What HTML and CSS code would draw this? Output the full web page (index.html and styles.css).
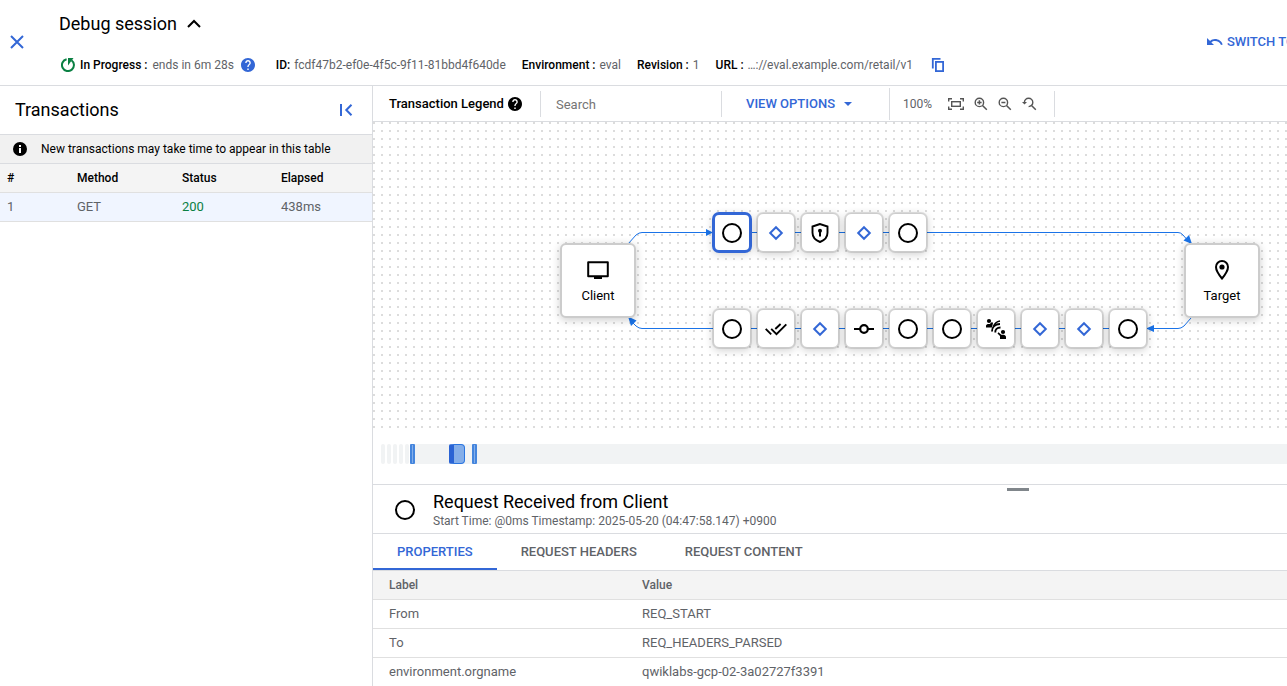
FILE: index.html
```
<!DOCTYPE html>
<html lang="en">
<head>
    <meta charset="UTF-8">
    <meta name="viewport" content="width=device-width, initial-scale=1.0">
    <title>Debug session</title>
    <link rel="stylesheet" href="styles.css">
</head>
<body>
    <!-- Shared icons -->
    <svg class="sprite" aria-hidden="true">
        <symbol id="help" viewBox="2 2 20 20"><path d="M12 2C6.48 2 2 6.48 2 12s4.48 10 10 10 10-4.48 10-10S17.52 2 12 2zm1 17h-2v-2h2v2zm2.07-7.75l-.9.92C13.45 12.9 13 13.5 13 15h-2v-.5c0-1.1.45-2.1 1.17-2.83l1.24-1.26c.37-.36.59-.86.59-1.41 0-1.1-.9-2-2-2s-2 .9-2 2H8c0-2.21 1.79-4 4-4s4 1.79 4 4c0 .88-.36 1.68-.93 2.25z" fill="currentColor"/></symbol>
        <symbol id="ring" viewBox="0 0 24 24"><circle cx="12" cy="12" r="9" fill="none" stroke="currentColor" stroke-width="2"/></symbol>
        <symbol id="diamond" viewBox="0 0 24 24"><path d="M12 6.2l5.8 5.8-5.8 5.8L6.2 12z" fill="none" stroke="#3367d6" stroke-width="2"/></symbol>
    </svg>

    <!-- Session header -->
    <header class="header">
        <button class="icon-btn close" aria-label="Close">
            <svg width="14" height="14" viewBox="0 0 14 14"><path d="M1 1l12 12M13 1L1 13" stroke="currentColor" stroke-width="2"/></svg>
        </button>
        <div class="session">
            <h1 class="session-title">Debug session
                <button class="icon-btn" aria-label="Collapse">
                    <svg width="14" height="9" viewBox="0 0 14 9"><path d="M1 8l6-6 6 6" fill="none" stroke="#000" stroke-width="2"/></svg>
                </button>
            </h1>
            <div class="session-meta">
                <div class="meta progress">
                    <svg width="14" height="14" viewBox="0 0 14 14"><path d="M10.500 2.200A6 6 0 1 1 5.600 1.200" fill="none" stroke="#0b8043" stroke-width="2"/><path d="M7 0h5.500L7 7.500z" fill="#0b8043"/></svg>
                    <b>In Progress :</b> <span>ends in 6m 28s</span>
                    <svg class="help-blue" width="14" height="14"><use href="#help"/></svg>
                </div>
                <div class="meta"><b>ID:</b> <span>fcdf47b2-ef0e-4f5c-9f11-81bbd4f640de</span></div>
                <div class="meta"><b>Environment :</b> <span>eval</span></div>
                <div class="meta"><b>Revision :</b> <span>1</span></div>
                <div class="meta"><b>URL :</b> <span>…://eval.example.com/retail/v1</span></div>
                <button class="icon-btn copy" aria-label="Copy URL">
                    <svg width="14" height="14" viewBox="0 0 14 14"><path d="M1.8 10.500V.9H9.500" fill="none" stroke="currentColor" stroke-width="1.800"/><rect x="4.900" y="3.900" width="7.200" height="9.200" fill="none" stroke="currentColor" stroke-width="1.800"/></svg>
                </button>
            </div>
        </div>
        <button class="text-btn switch">
            <svg width="16" height="8" viewBox="0 0 16 8"><path d="M0 0v7h7L4.400 4.400C5.300 3.500 6.600 3 8 3c2.700 0 5 1.600 6 4l1.700-.6C14.500 3.200 11.500 1.100 8 1.100c-1.900 0-3.600.7-4.900 1.900z" fill="currentColor"/></svg>
            SWITCH TO
        </button>
    </header>

    <div class="content">
        <!-- Transactions -->
        <aside class="sidebar">
            <div class="sidebar-head">
                <h2>Transactions</h2>
                <button class="icon-btn" aria-label="Hide transactions">
                    <svg width="13" height="12" viewBox="0 0 13 12"><path d="M1 0v12" stroke="currentColor" stroke-width="2"/><path d="M11.500.800L6.300 6l5.200 5.200" fill="none" stroke="currentColor" stroke-width="2"/></svg>
                </button>
            </div>
            <p class="notice">
                <svg width="14" height="14" viewBox="0 0 14 14"><circle cx="7" cy="7" r="7" fill="#000"/><path d="M6 3h2v2H6zM6 6h2v5H6z" fill="#fff"/></svg>
                New transactions may take time to appear in this table
            </p>
            <table class="transactions">
                <thead>
                    <tr><th class="col-num">#</th><th class="col-method">Method</th><th class="col-status">Status</th><th>Elapsed</th></tr>
                </thead>
                <tbody>
                    <tr><td>1</td><td>GET</td><td class="ok">200</td><td>438ms</td></tr>
                </tbody>
            </table>
        </aside>

        <main class="main">
            <div class="toolbar">
                <div class="tool legend">Transaction Legend <svg width="14" height="14"><use href="#help"/></svg></div>
                <div class="tool search"><input type="text" placeholder="Search" aria-label="Search"></div>
                <div class="tool options">
                    <button class="text-btn">VIEW OPTIONS <svg width="8" height="4" viewBox="0 0 8 4"><path d="M0 0h8L4 4z" fill="currentColor"/></svg></button>
                </div>
                <div class="tool zoom">
                    <span>100%</span>
                    <button class="icon-btn" aria-label="Fit to screen">
                        <svg width="16" height="12" viewBox="0 0 16 12"><path d="M.7 3.500V.7H4M12 .7h3.300v2.800M15.300 8.500v2.800H12M4 11.300H.7V8.500" fill="none" stroke="currentColor" stroke-width="1.400"/><rect x="3.700" y="3.700" width="8.600" height="4.600" fill="none" stroke="currentColor" stroke-width="1.400"/></svg>
                    </button>
                    <button class="icon-btn" aria-label="Zoom in">
                        <svg width="14" height="14" viewBox="0 0 14 14"><circle cx="5.400" cy="5.400" r="4.200" fill="none" stroke="currentColor" stroke-width="1.400"/><path d="M8.500 8.500l4.300 4.300M3.200 5.400h4.400M5.400 3.200v4.400" stroke="currentColor" stroke-width="1.500"/></svg>
                    </button>
                    <button class="icon-btn" aria-label="Zoom out">
                        <svg width="14" height="14" viewBox="0 0 14 14"><circle cx="5.400" cy="5.400" r="4.200" fill="none" stroke="currentColor" stroke-width="1.400"/><path d="M8.500 8.500l4.300 4.300M3.400 5.400h4" stroke="currentColor" stroke-width="1.500"/></svg>
                    </button>
                    <button class="icon-btn" aria-label="Reset zoom">
                        <svg width="15" height="14" viewBox="0 0 15 14"><path d="M2.400 5.400a4.200 4.200 0 1 1 4.200 4.200" fill="none" stroke="currentColor" stroke-width="1.400"/><path d="M9.500 8.500l4.300 4.300" stroke="currentColor" stroke-width="1.500"/><path d="M0 5h5L2.500 7.600z" fill="currentColor"/></svg>
                    </button>
                </div>
            </div>

            <!-- Flow diagram -->
            <div class="canvas">
                <svg class="wires" width="914" height="311" viewBox="0 0 914 311" fill="none" stroke="#1a73e8">
                    <path d="M255 122L263 113Q266 110.500 269 110.500H339"/>
                    <path d="M339 110.500H805Q808 110.500 810 113L817 121"/>
                    <path d="M818 196L811 204Q808 206.500 805 206.500H775"/>
                    <path d="M775 206.500H269Q266 206.500 263 204L256 197"/>
                    <g fill="#1a73e8" stroke="none">
                        <path d="M340 110.500l-7-3.500v7zM773 206.500l8-3.500v7zM819 122l-8.500-3.500 5.500-5.500zM255 194.500l8.500 4-5.500 5.500z"/>
                    </g>
                </svg>

                <div class="endpoint client">
                    <svg width="24" height="24" viewBox="0 0 24 24"><path d="M2.200 4.200h19.600v14H2.200z" fill="none" stroke="#000" stroke-width="2" stroke-linejoin="round"/><path d="M8 18h8v3H8z"/></svg>
                    Client
                </div>
                <div class="endpoint target">
                    <svg width="24" height="24" viewBox="0 0 24 24"><path d="M12 3c-3.400 0-6 2.600-6 6 0 4.300 6 11.500 6 11.500S18 13.300 18 9c0-3.400-2.600-6-6-6z" fill="none" stroke="#000" stroke-width="2"/><circle cx="12" cy="9" r="2.600"/></svg>
                    Target
                </div>

                <div class="steps request">
                    <button class="step selected" aria-label="Request received from client"><svg><use href="#ring"/></svg></button>
                    <button class="step" aria-label="Condition"><svg><use href="#diamond"/></svg></button>
                    <button class="step" aria-label="Security policy">
                        <svg viewBox="0 0 24 24"><path d="M12 3L4.500 5.500v6.300c0 4.300 3.200 7.600 7.500 9.200 4.300-1.600 7.500-4.900 7.500-9.200V5.500z" fill="none" stroke="#000" stroke-width="1.900"/><circle cx="12" cy="9.700" r="2"/><path d="M11 10h2v5.500h-2z"/></svg>
                    </button>
                    <button class="step" aria-label="Condition"><svg><use href="#diamond"/></svg></button>
                    <button class="step" aria-label="Request step"><svg><use href="#ring"/></svg></button>
                </div>
                <div class="steps response">
                    <button class="step" aria-label="Response step"><svg><use href="#ring"/></svg></button>
                    <button class="step" aria-label="Checks">
                        <svg viewBox="0 0 24 24"><path d="M7.200 11.800l5.300 5.300L22.300 7.300M1.700 11.800l5.500 5.500M11.300 12l5.300-5" fill="none" stroke="#000" stroke-width="1.900"/></svg>
                    </button>
                    <button class="step" aria-label="Condition"><svg><use href="#diamond"/></svg></button>
                    <button class="step" aria-label="Commit">
                        <svg viewBox="0 0 24 24"><circle cx="12" cy="12" r="3.800" fill="none" stroke="#000" stroke-width="2.200"/><path d="M2 12h6M16 12h6" stroke="#000" stroke-width="2"/></svg>
                    </button>
                    <button class="step" aria-label="Response step"><svg><use href="#ring"/></svg></button>
                    <button class="step" aria-label="Response step"><svg><use href="#ring"/></svg></button>
                    <button class="step" aria-label="Connection">
                        <svg viewBox="0 0 24 24"><circle cx="5" cy="4" r="2.100"/><path d="M2 10.500V8.700C2 7.300 4 6.700 5.700 7L8 5l1 1-1 4.500zM16 22v-3l-2.500-2.600 1-1.200 2.800 2.500c2.200-.3 4.700.3 4.700 2V22z"/><circle cx="19" cy="15" r="2.100"/><path d="M8 14.500c0-4.500 3-7.500 8-7.500M11.300 15.500c-.3-3 1.700-5 5.200-5" fill="none" stroke="#000" stroke-width="1.900"/><path d="M9.500 9.500C10.500 6.500 12.500 4.500 16 4" fill="none" stroke="#000" stroke-width="1.600"/></svg>
                    </button>
                    <button class="step" aria-label="Condition"><svg><use href="#diamond"/></svg></button>
                    <button class="step" aria-label="Condition"><svg><use href="#diamond"/></svg></button>
                    <button class="step" aria-label="Response sent"><svg><use href="#ring"/></svg></button>
                </div>
            </div>

            <!-- Timeline -->
            <div class="timeline">
                <i class="tick"></i><i class="tick"></i><i class="tick"></i><i class="tick"></i><i class="tick"></i>
                <div class="track">
                    <i class="mark"></i><i class="mark wide"></i><i class="mark"></i>
                </div>
            </div>

            <!-- Step details -->
            <section class="details">
                <div class="grip"></div>
                <div class="details-head">
                    <svg width="24" height="24"><use href="#ring"/></svg>
                    <div>
                        <h2>Request Received from Client</h2>
                        <p>Start Time: @0ms Timestamp: 2025-05-20 (04:47:58.147) +0900</p>
                    </div>
                </div>
                <nav class="tabs">
                    <button class="tab active">PROPERTIES</button>
                    <button class="tab">REQUEST HEADERS</button>
                    <button class="tab">REQUEST CONTENT</button>
                </nav>
                <table class="properties">
                    <thead>
                        <tr><th class="col-label">Label</th><th>Value</th></tr>
                    </thead>
                    <tbody>
                        <tr><td>From</td><td>REQ_START</td></tr>
                        <tr><td>To</td><td>REQ_HEADERS_PARSED</td></tr>
                        <tr><td>environment.orgname</td><td>qwiklabs-gcp-02-3a02727f3391</td></tr>
                    </tbody>
                </table>
            </section>
        </main>
    </div>
</body>
</html>
```
FILE: styles.css
```
* {
    box-sizing: border-box;
}

body {
    margin: 0;
    height: 100vh;
    display: flex;
    flex-direction: column;
    overflow: hidden;
    font-family: Roboto, "Liberation Sans", sans-serif;
    font-size: 12px;
    line-height: 16px;
    color: #000;
    background: #fff;
}

h1, h2, p {
    margin: 0;
    font-weight: 400;
}

h1, h2 {
    font-size: 18px;
    line-height: 24px;
}

b {
    font-weight: 500;
}

svg {
    flex: none;
}

button {
    font: inherit;
    border: none;
    background: none;
    padding: 0;
    cursor: pointer;
}

.sprite {
    position: absolute;
    width: 0;
    height: 0;
}

.icon-btn {
    display: inline-flex;
    align-items: center;
    color: #3367d6;
}

.text-btn {
    display: flex;
    align-items: center;
    font-size: 13px;
    font-weight: 500;
    white-space: nowrap;
    color: #3367d6;
}

/* Header */
.header {
    flex: none;
    display: flex;
    align-items: center;
    height: 86px;
    padding-bottom: 1px;
    border-bottom: 1px solid #dadce0;
}

.close {
    flex: none;
    width: 59px;
    padding-left: 10px;
}

.session {
    flex: 1;
    display: flex;
    flex-direction: column;
    gap: 21px;
    white-space: nowrap;
}

.session-title {
    display: flex;
    align-items: center;
    gap: 10px;
}

.session-meta {
    display: flex;
    align-items: center;
    gap: 16px;
    padding-left: 2px;
}

.meta {
    display: flex;
    align-items: center;
    gap: 4px;
}

.meta span {
    color: #5f6368;
}

.progress {
    gap: 5px;
    margin-right: 5px;
}

.help-blue {
    margin-left: 2px;
    color: #3367d6;
}

.copy {
    margin-left: 2px;
}

.switch {
    flex: 0 0 80px;
    min-width: 0;
    gap: 4px;
}

/* Sidebar */
.content {
    flex: 1;
    display: flex;
    min-height: 0;
}

.sidebar {
    flex: 0 0 373px;
    border-right: 1px solid #dadce0;
}

.sidebar-head {
    display: flex;
    align-items: center;
    justify-content: space-between;
    height: 48px;
    padding: 0 19px 0 15px;
}

.notice {
    display: flex;
    align-items: center;
    gap: 14px;
    height: 30px;
    padding-left: 13px;
    background: #f1f1f1;
    border-top: 1px solid #dadce0;
    border-bottom: 1px solid #dadce0;
}

table {
    width: 100%;
    table-layout: fixed;
    border-collapse: separate;
    border-spacing: 0;
}

th, td {
    height: 29px;
    padding: 0;
    text-align: left;
    font-weight: 500;
    border-bottom: 1px solid #e0e0e0;
}

th {
    background: #f4f4f4;
}

td {
    font-size: 13px;
    font-weight: 400;
    color: #5f6368;
}

.transactions th:first-child,
.transactions td:first-child {
    padding-left: 7px;
}

.transactions td {
    background: #f0f5ff;
}

.transactions .ok {
    color: #0b8043;
}

.col-num {
    width: 77px;
}

.col-method {
    width: 105px;
}

.col-status {
    width: 99px;
}

/* Toolbar */
.main {
    flex: 1;
    min-width: 0;
    display: flex;
    flex-direction: column;
}

.toolbar,
.canvas,
.timeline,
.details {
    flex: none;
}

.toolbar {
    display: flex;
    align-items: center;
    height: 36px;
    border-bottom: 1px solid #dadce0;
}

.tool {
    display: flex;
    align-items: center;
    height: 26px;
    border-right: 1px solid #dadce0;
}

.legend {
    width: 168px;
    gap: 4px;
    padding: 1px 0 0 16px;
    font-size: 13px;
    font-weight: 500;
}

.search {
    width: 181px;
    padding-left: 15px;
}

.search input {
    width: 100%;
    padding: 2px 0 0;
    border: none;
    outline: none;
    font: inherit;
    font-size: 13px;
}

.search input::placeholder {
    color: #757575;
}

.options {
    width: 168px;
    height: 32px;
    padding-left: 24px;
}

.options .text-btn {
    gap: 9px;
    padding-top: 1px;
}

.zoom {
    width: 165px;
    gap: 10px;
    padding-left: 13px;
    color: #5f6368;
}

.zoom span {
    margin-right: 6px;
}

.zoom .icon-btn {
    color: #555;
}

/* Diagram */
.canvas {
    position: relative;
    height: 311px;
    background-image: radial-gradient(circle, #dcdcdc 1px, transparent 1px);
    background-size: 8px 8px;
    background-position: -3px -3px;
}

.wires {
    position: absolute;
    top: 0;
    left: 0;
}

.endpoint {
    position: absolute;
    top: 121px;
    width: 76px;
    height: 75px;
    display: flex;
    flex-direction: column;
    align-items: center;
    justify-content: center;
    gap: 6px;
    font-size: 13px;
    background: #fff;
    border: 2px solid #ccc;
    border-radius: 6px;
    box-shadow: 0 2px 8px rgba(0, 0, 0, 0.2);
}

.client {
    left: 187px;
}

.target {
    left: 811px;
}

.steps {
    position: absolute;
    left: 340px;
    display: flex;
    gap: 6px;
}

.request {
    top: 91px;
}

.response {
    top: 187px;
}

.step {
    width: 38px;
    height: 39px;
    display: flex;
    align-items: center;
    justify-content: center;
    color: #000;
    background: #fff;
    border: 1px solid #ccc;
    border-radius: 6px;
    box-shadow: 0 0 0 1px rgba(0, 0, 0, 0.1), 0 2px 8px rgba(0, 0, 0, 0.2);
}

.step svg {
    width: 24px;
    height: 24px;
}

.step.selected {
    border: 2px solid #3367d6;
    box-shadow: 0 0 0 1px #3367d6, 0 2px 8px rgba(0, 0, 0, 0.2);
}

/* Timeline */
.timeline {
    display: flex;
    gap: 2px;
    height: 20px;
    margin: 11px 0 20px;
    padding-left: 8px;
}

.tick {
    width: 4px;
    background: #f1f3f4;
    border-radius: 2px;
}

.track {
    flex: 1;
    display: flex;
    margin-left: -1px;
    background: #f1f3f4;
}

.mark {
    width: 5px;
    margin-right: 34px;
    background: #84aee9;
    border: 1px solid #4485dd;
    border-width: 1px 2px;
    border-radius: 1px;
}

.mark.wide {
    width: 16px;
    margin-right: 7px;
    border: 1px solid #2a75e0;
    border-left: 5px solid #2a63d4;
    border-radius: 2px 4px 4px 2px;
}

/* Details */
.details {
    position: relative;
    border-top: 1px solid #dadce0;
}

.grip {
    position: absolute;
    top: 3px;
    left: 634px;
    width: 22px;
    height: 3px;
    background: #80868b;
}

.details-head {
    display: flex;
    align-items: center;
    gap: 16px;
    height: 49px;
    padding: 1px 0 0 20px;
    border-bottom: 1px solid #dadce0;
}

.details-head h2 {
    line-height: 22px;
}

.details-head p {
    color: #5f6368;
}

.tabs {
    display: flex;
    height: 37px;
    border-bottom: 1px solid #dadce0;
}

.tab {
    padding: 2px 24px 0;
    font-size: 13px;
    font-weight: 500;
    color: #5f6368;
    border-bottom: 2px solid transparent;
}

.tab.active {
    color: #3367d6;
    border-color: #3367d6;
}

.properties th,
.properties td {
    padding-left: 16px;
    color: #5f6368;
}

.col-label {
    width: 253px;
}
```
